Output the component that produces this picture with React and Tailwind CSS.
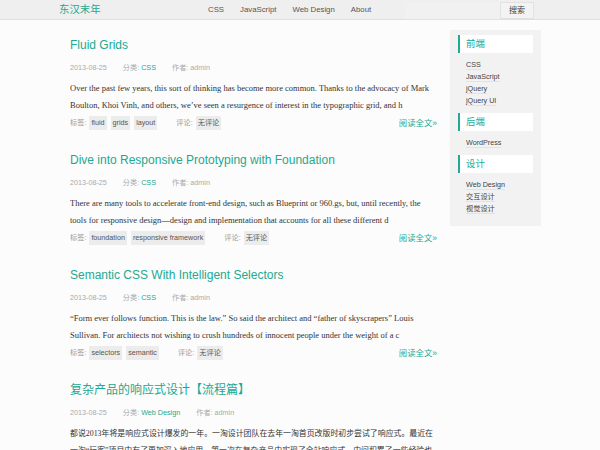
const teal = 'text-[#22a992]';

const posts = [
  {
    title: 'Fluid Grids',
    date: '2013-08-25',
    cat: 'CSS',
    lines: [
      'Over the past few years, this sort of thinking has become more common. Thanks to the advocacy of Mark',
      'Boulton, Khoi Vinh, and others, we’ve seen a resurgence of interest in the typographic grid, and h',
    ],
    tags: ['fluid', 'grids', 'layout'],
  },
  {
    title: 'Dive into Responsive Prototyping with Foundation',
    date: '2013-08-25',
    cat: 'CSS',
    lines: [
      'There are many tools to accelerate front-end design, such as Blueprint or 960.gs, but, until recently, the',
      'tools for responsive design—design and implementation that accounts for all these different d',
    ],
    tags: ['foundation', 'responsive framework'],
  },
  {
    title: 'Semantic CSS With Intelligent Selectors',
    date: '2013-08-25',
    cat: 'CSS',
    lines: [
      '“Form ever follows function. This is the law.” So said the architect and “father of skyscrapers” Louis',
      'Sullivan. For architects not wishing to crush hundreds of innocent people under the weight of a c',
    ],
    tags: ['selectors', 'semantic'],
  },
  {
    title: '复杂产品的响应式设计【流程篇】',
    date: '2013-08-25',
    cat: 'Web Design',
    cjk: true,
    lines: [
      '都说2013年将是响应式设计爆发的一年。一淘设计团队在去年一淘首页改版时初步尝试了响应式。最近在',
      '一淘“玩客”项目中有了更加深入地应用，第一次在复杂产品中实现了全站响应式。中间积累了一些经验也',
    ],
    tags: [],
  },
];

const sidebar = [
  { title: '前端', links: ['CSS', 'JavaScript', 'jQuery', 'jQuery UI'] },
  { title: '后端', links: ['WordPress'] },
  { title: '设计', links: ['Web Design', '交互设计', '视觉设计'] },
];

function Post({ post }) {
  return (
    <article className="mb-[20px]">
      <h2 className={`text-[12px] leading-[20px] ${teal}`}>{post.title}</h2>
      <div className="mt-[7px] flex gap-[16px] text-[7.2px] leading-[12px] text-[#aaa]">
        <span>{post.date}</span>
        <span>
          分类: <span className={teal}>{post.cat}</span>
        </span>
        <span>作者: admin</span>
      </div>
      <div
        className={`mt-[6px] h-[34px] overflow-hidden font-['Liberation_Serif','Noto_Sans_CJK_SC',serif] leading-[17px] text-[#333] ${
          post.cjk ? 'text-[7.9px]' : 'text-[8.5px]'
        }`}
      >
        {post.lines.map((l) => (
          <p key={l} className="whitespace-nowrap">
            {l}
          </p>
        ))}
      </div>
      <div className="mt-[2px] flex h-[14px] items-center text-[7.2px]">
        <span className="text-[#999]">标签:</span>
        <div className="ml-[3px] flex gap-[4px]">
          {post.tags.map((t) => (
            <span key={t} className="bg-[#ececec] px-[2px] leading-[14px] text-[#555]">
              {t}
            </span>
          ))}
        </div>
        <span className="ml-[19px] text-[#999]">评论:</span>
        <span className="ml-[3px] bg-[#ececec] px-[2px] leading-[14px] text-[#555]">无评论</span>
        <span className={`ml-auto text-[8.4px] ${teal}`}>阅读全文»</span>
      </div>
    </article>
  );
}

export default function App() {
  return (
    <div className="h-[450px] overflow-hidden bg-[#fcfcfc] font-['Liberation_Sans','Noto_Sans_CJK_SC',sans-serif]">
      <header className="flex h-[20px] border-b border-[#e0e0e0] bg-[#efefef] pl-[59px] pr-[66px]">
        <div className={`w-[149px] text-[10.4px] leading-[19px] ${teal}`}>东汉末年</div>
        <nav className="flex gap-[16px] text-[7.8px] leading-[19px] text-[#555]">
          <span>CSS</span>
          <span>JavaScript</span>
          <span>Web Design</span>
          <span>About</span>
        </nav>
        <div className="ml-auto mt-[2px] h-[17px] w-[95px] bg-[#f1f1f1]" />
        <button className="mt-[2px] h-[17px] w-[34px] border border-[#e2e2e2] bg-[#f3f3f3] text-[8px] text-[#444]">
          搜索
        </button>
      </header>

      <div className="flex pl-[70px]">
        <main className="w-[367px] pt-[15px]">
          {posts.map((p) => (
            <Post key={p.title} post={p} />
          ))}
        </main>

        <aside className="ml-[13px] mt-[10px] h-fit w-[91px] bg-[#f2f2f2] px-[8px] pb-[5px] pt-[5px]">
          {sidebar.map((s) => (
            <div key={s.title}>
              <div className={`h-[18px] border-l-2 border-[#22a992] bg-white pl-[6px] text-[9.4px] leading-[18px] ${teal}`}>
                {s.title}
              </div>
              <ul className="py-[6px] pl-[8px] text-[7.2px] leading-[12px] text-[#444]">
                {s.links.map((l) => (
                  <li key={l}>
                    <span className="border-b border-[#e2e2e2]">{l}</span>
                  </li>
                ))}
              </ul>
            </div>
          ))}
        </aside>
      </div>
    </div>
  );
}
